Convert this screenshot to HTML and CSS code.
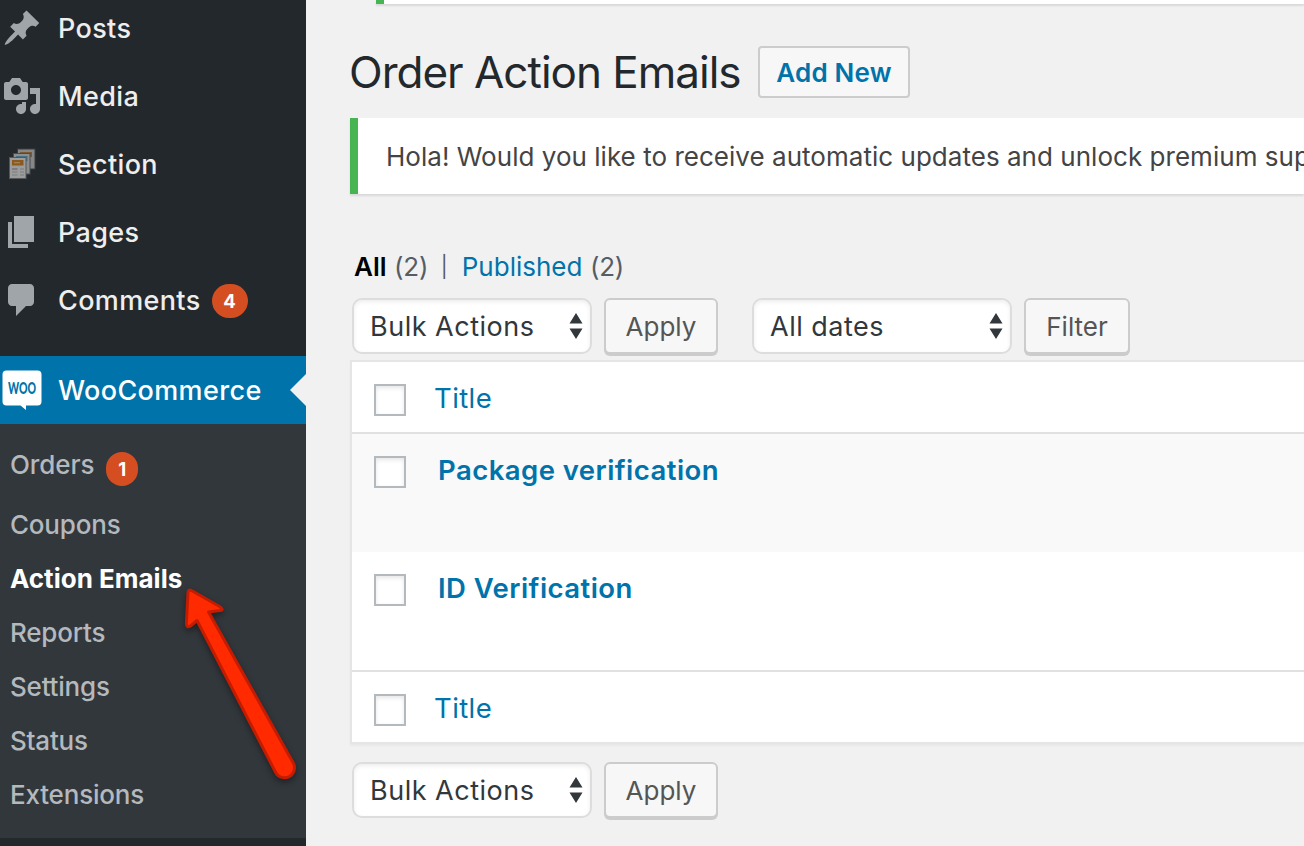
FILE: index.html
```html
<!DOCTYPE html>
<html lang="en">
<head>
<meta charset="utf-8">
<title>Order Action Emails</title>
<link rel="stylesheet" href="styles.css">
</head>
<body>
<div class="app">
  <nav class="sidebar">
    <ul class="menu">
      <li class="menu-item"><svg class="icon" viewBox="0 0 20 20"><path d="M10.44 3.02l1.82-1.82 6.36 6.35-1.83 1.82c-1.05-.68-2.48-.57-3.41.36l-.75.75c-.92.93-1.04 2.35-.35 3.41l-1.83 1.82-2.41-2.41-2.8 2.79c-.42.42-3.38 2.71-3.8 2.29s1.86-3.39 2.28-3.81l2.79-2.79L4.1 9.36l1.83-1.82c1.05.69 2.48.57 3.4-.36l.75-.75c.93-.92 1.05-2.35.36-3.41z"/></svg><span>Posts</span></li>
      <li class="menu-item"><svg class="icon" viewBox="0 0 20 20"><path d="M13 11V4c0-.55-.45-1-1-1h-1.67L9 1H5L3.67 3H2c-.55 0-1 .45-1 1v7c0 .55.45 1 1 1h10c.55 0 1-.45 1-1zM7 4.5c1.38 0 2.5 1.12 2.5 2.5S8.38 9.5 7 9.5 4.5 8.38 4.5 7 5.62 4.5 7 4.5zM14 6h5v10.5c0 1.38-1.12 2.5-2.5 2.5S14 17.88 14 16.5s1.12-2.5 2.5-2.5c.17 0 .34.02.5.05V9h-3V6zm-4 8.05V13h2v3.5c0 1.38-1.12 2.5-2.5 2.5S7 17.88 7 16.5 8.12 14 9.5 14c.17 0 .34.02.5.05z"/></svg><span>Media</span></li>
      <li class="menu-item"><svg class="icon" viewBox="0 0 40 40">
        <rect x="15" y="4.500" width="18.500" height="21" fill="#3a3d3f"/>
        <rect x="16" y="5.500" width="16.500" height="19" fill="#858686"/><rect x="18" y="8" width="12" height="5" fill="#7b5832"/>
        <rect x="11" y="9" width="17.500" height="21.500" fill="#484d50"/>
        <rect x="12" y="10" width="15.500" height="19.500" fill="#8d8e8e"/><rect x="14" y="12" width="11.500" height="5" fill="#466f88"/>
        <rect x="7" y="13" width="17.500" height="22" fill="#54585a"/>
        <rect x="8" y="14" width="15.500" height="20" fill="#9b9c9b"/><rect x="10" y="16" width="11.500" height="5.500" fill="#8a5a20"/>
        <path d="M12 18.700h6" stroke="#a58556" stroke-width="1.200"/>
        <path d="M10 25h5.500" stroke="#6d7072" stroke-width="1.400"/>
        <path d="M10 28h5.500M10 31h5.500M18 25h4M18 28h4M18 31h4" stroke="#868889" stroke-width="1.400"/>
      </svg><span>Section</span></li>
      <li class="menu-item"><svg class="icon" viewBox="0 0 20 20"><path d="M6 15V2h10v13H6zm-1 1h8v2H3V5h2v11z"/></svg><span>Pages</span></li>
      <li class="menu-item"><svg class="icon" viewBox="0 0 20 20"><path d="M5 2h9c1.100 0 2 .9 2 2v7c0 1.100-.9 2-2 2h-2l-5 5v-5H5c-1.100 0-2-.9-2-2V4c0-1.100.9-2 2-2z"/></svg><span>Comments</span><b class="badge">4</b></li>
      <li class="menu-item current"><svg class="icon" viewBox="0 0 40 40"><path fill="#fff" d="M4.500 0.500h31a4 4 0 0 1 4 4v27a4 4 0 0 1-4 4H24v4.500l-5.500-4.500h-14a4 4 0 0 1-4-4v-27a4 4 0 0 1 4-4z"/><text class="woo" x="6" y="23.500" textLength="28" lengthAdjust="spacingAndGlyphs">WOO</text></svg><span>WooCommerce</span></li>
    </ul>
    <ul class="submenu">
      <li class="first"><span>Orders</span><b class="badge small">1</b></li>
      <li>Coupons</li>
      <li class="active">Action Emails</li>
      <li>Reports</li>
      <li>Settings</li>
      <li>Status</li>
      <li>Extensions</li>
    </ul>
    <svg class="arrow" viewBox="0 0 140 220" width="140" height="220">
      <path d="M22 20.500Q22.300 16.500 26 18.800L54 34.700Q58.500 38 53.500 38.600L42.500 40L127.200 190.800A9.800 9.800 0 0 1 109.800 200.700L31 48.500L24.500 54Q20.300 56.500 20.400 51Z"/>
    </svg>
  </nav>
  <main class="content">
    <div class="notice clipped"></div>
    <header class="page-head"><h1>Order Action Emails</h1><a class="add-new">Add New</a></header>
    <div class="notice hola">Hola! Would you like to receive automatic updates and unlock premium support?</div>
    <div class="views"><b>All</b><span class="count">(2)</span><span class="sep">|</span><a>Published</a><span class="count">(2)</span></div>
    <div class="tablenav">
      <div class="select bulk"><span>Bulk Actions</span><svg width="14" height="26" viewBox="0 0 14 26"><path d="M7 0l6.500 10.500H.5zM7 26L.5 15.500h13z"/></svg></div>
      <div class="button">Apply</div>
      <div class="select dates"><span>All dates</span><svg width="14" height="26" viewBox="0 0 14 26"><path d="M7 0l6.500 10.500H.5zM7 26L.5 15.500h13z"/></svg></div>
      <div class="button filter">Filter</div>
    </div>
    <div class="table">
      <div class="row head"><i class="check"></i><a>Title</a></div>
      <div class="row item alt"><i class="check"></i><a>Package verification</a></div>
      <div class="row item"><i class="check"></i><a>ID Verification</a></div>
      <div class="row foot"><i class="check"></i><a>Title</a></div>
    </div>
    <div class="tablenav bottom">
      <div class="select bulk"><span>Bulk Actions</span><svg width="14" height="26" viewBox="0 0 14 26"><path d="M7 0l6.500 10.500H.5zM7 26L.5 15.500h13z"/></svg></div>
      <div class="button">Apply</div>
    </div>
  </main>
</div>
</body>
</html>
```
FILE: styles.css
```css
* { box-sizing: border-box; }
body { margin: 0; background: #f1f1f1; font-family: Inter, "Liberation Sans", sans-serif; font-size: 26.5px; color: #444; }
ul { list-style: none; margin: 0; padding: 0; }
.app { display: flex; width: 1304px; height: 846px; overflow: hidden; white-space: nowrap; }
.sidebar { position: relative; flex: none; width: 306px; background: #23282d; }
.menu { margin-top: -6px; color: #eee; font-size: 27px; font-weight: 500; letter-spacing: .36px; }
.menu-item { display: flex; align-items: center; height: 68px; padding-left: 2px; }
.menu-item span { margin-left: 16px; }
.icon { flex: none; width: 40px; height: 40px; fill: #a0a5aa; }
.current { position: relative; margin-top: 22px; background: #0073aa; color: #fff; }
.current::after { content: ""; position: absolute; right: 0; top: 18px; border: 16px solid transparent; border-left: 0; border-right-color: #f1f1f1; }
.woo { font: 900 16px Lato, sans-serif; letter-spacing: 0; fill: #0073aa; }
.badge { display: flex; align-items: center; justify-content: center; width: 36px; height: 34px; margin-left: 11px; border-radius: 17px; background: #d54e21; color: #fff; font-size: 18.5px; font-weight: 700; letter-spacing: 0; margin-top: 2px; }
.submenu { height: 414px; padding: 14px 0 0 10px; background: #32373c; color: #b4b9be; font-size: 26px; font-weight: 500; line-height: 54px; letter-spacing: -.2px; }
.submenu .first { display: flex; height: 60px; letter-spacing: -.1px; }
.badge.small { width: 32px; margin-left: 12px; margin-top: 14px; }
.submenu .active { color: #fff; font-weight: 700; letter-spacing: 0; }
.arrow { position: absolute; left: 166px; top: 572px; overflow: visible; fill: #ff2a00; stroke: #c41c00; stroke-width: 3px; stroke-linejoin: round; filter: drop-shadow(0 3px 3px rgba(0,0,0,.4)); }
.content { flex: 1; min-width: 0; padding-left: 44px; }
.notice { background: #fff; border-left: 8px solid #46b450; box-shadow: 0 2px 2px rgba(0,0,0,.1); }
.clipped { height: 4px; margin-left: 26px; }
.page-head { display: flex; align-items: flex-start; height: 114px; padding-top: 42px; }
h1 { width: 409px; margin: 0 0 0 -1px; color: #23282d; font-size: 44px; font-weight: 400; line-height: 52px; letter-spacing: -1px; }
.add-new { height: 52px; width: 152px; border: 2px solid #ccc; border-radius: 4px; background: #f7f7f7; color: #0073aa; font-weight: 600; font-size: 26px; line-height: 50px; letter-spacing: .2px; text-align: center; }
.hola { height: 76px; padding-left: 28px; line-height: 78px; font-size: 26px; letter-spacing: .03px; }
.views { display: flex; height: 32px; margin: 57px 0 15px 4px; line-height: 32px; font-size: 26px; color: #555d66; }
.views b { color: #000; font-weight: 600; }
.views .count { margin-left: 7.5px; letter-spacing: -.2px; }
.views .sep { margin: 0 14px 0 12.5px; font-size: 21px; }
.views a, .row a { color: #0073aa; }
.tablenav { display: flex; height: 62px; padding-left: 2px; }
.select { display: flex; align-items: center; justify-content: space-between; height: 56px; border: 2px solid #ddd; border-radius: 10px; background: #fff; box-shadow: inset 0 2px 4px rgba(0,0,0,.07); padding: 0 7.5px 0 16px; color: #32373c; font-size: 27px; letter-spacing: .5px; }
.select svg { fill: #32373c; }
.bulk { width: 240px; }
.dates { width: 260px; margin-left: 34px; }
.button { width: 114px; height: 56px; margin-left: 12px; border: 2px solid #ccc; border-radius: 6px; background: #f7f7f7; box-shadow: 0 2px 0 #ccc; color: #555; font-size: 26px; line-height: 54px; text-align: center; }
.filter { width: 106px; }
.table { height: 384px; border: 2px solid #e5e5e5; border-right: 0; background: #fff; box-shadow: 0 2px 2px rgba(0,0,0,.04); }
.row { display: flex; align-items: flex-start; padding: 22px 0 0 22px; line-height: 32px; }
.check { width: 32px; height: 32px; border: 2px solid #b4b9be; background: #fff; box-shadow: inset 0 2px 4px rgba(0,0,0,.1); }
.row a { margin: -2px 0 0 28px; font-size: 27.5px; letter-spacing: .4px; }
.head { height: 72px; border-bottom: 2px solid #e1e1e1; }
.item { height: 118px; }
.item a { margin-left: 32px; font-weight: 600; letter-spacing: .45px; }
.alt { background: #f9f9f9; }
.foot { height: 72px; border-top: 2px solid #e1e1e1; }
.bottom { margin-top: 18px; }
```
